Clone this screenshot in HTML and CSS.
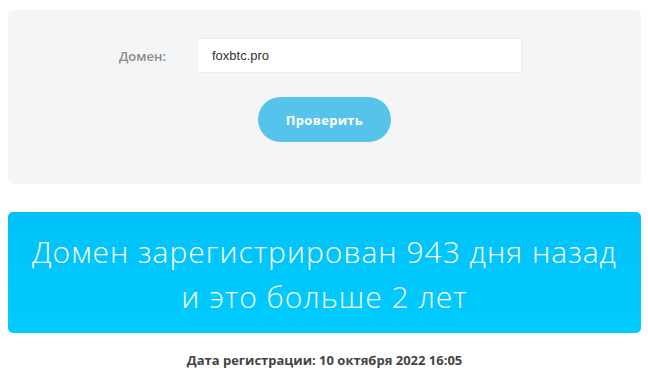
FILE: index.html
```html
<!DOCTYPE html>
<html lang="ru">
  <head>
    <meta charset="UTF-8" />
    <title>Проверка возраста домена</title>
    <link rel="stylesheet" href="styles.css">
  </head>
  <body>
    <div class="check-form">
      <div class="form-row">
        <label for="domainInput" class="form-label">Домен:</label>
        <input type="text" id="domainInput" class="domain-input" value="foxbtc.pro" />
      </div>
      <div class="form-actions">
        <button type="button" class="btn-check">Проверить</button>
      </div>
    </div>

    <div class="age-result">
      Домен зарегистрирован 943 дня назад<br />и это больше 2 лет
    </div>

    <p class="reg-date">Дата регистрации: 10 октября 2022 16:05</p>
  </body>
</html>
```

FILE: styles.css
```css
/* Base */
body {
  margin: 0;
  padding: 10px 7px 0 8px;
  font-family: "Open Sans", "DejaVu Sans", sans-serif;
  color: #444;
  background: #fff;
}

/* Form panel */
.check-form {
  background: #f3f5f6;
  border-radius: 5px;
  height: 174px;
  box-sizing: border-box;
  padding-top: 28px;
}

.form-row {
  display: flex;
  align-items: center;
  padding-left: 89px;
}

.form-label {
  width: 69px;
  margin-right: 31px;
  text-align: right;
  font-size: 13px;
  font-weight: 600;
  color: #8a8a8a;
}

.domain-input {
  width: 325px;
  height: 35px;
  box-sizing: border-box;
  border: 1px solid #ebeeef;
  border-radius: 2px;
  background: #fff;
  padding: 0 14px;
  font-family: "Liberation Sans", Arial, sans-serif;
  font-size: 13px;
  color: #333;
  outline: none;
}

.form-actions {
  display: flex;
  justify-content: center;
  margin-top: 24px;
}

.btn-check {
  width: 133px;
  height: 45px;
  border: none;
  border-radius: 23px;
  background: #56c3ec;
  color: #fff;
  font-family: inherit;
  font-size: 13px;
  font-weight: 700;
  letter-spacing: 0.3px;
  cursor: pointer;
}

/* Result */
.age-result {
  margin-top: 28px;
  height: 121px;
  box-sizing: border-box;
  padding-top: 17px;
  border-radius: 5px;
  background: linear-gradient(#00c1f9, #00ccfe);
  color: #fff;
  text-align: center;
  font-size: 30px;
  font-weight: 300;
  letter-spacing: 1px;
  line-height: 45px;
}

.reg-date {
  margin: 18px 0 0;
  text-align: center;
  font-size: 13px;
  font-weight: 700;
  color: #444;
}
```
